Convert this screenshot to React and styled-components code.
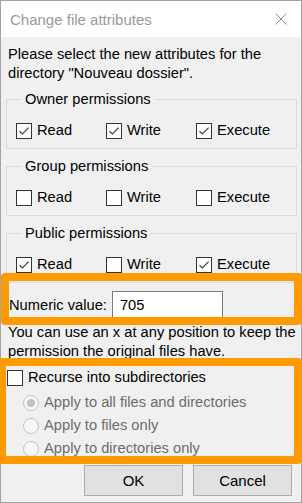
import React from "react";
import styled, { createGlobalStyle } from "styled-components";

const GlobalStyle = createGlobalStyle`
  html, body {
    margin: 0;
    padding: 0;
    background: #ffffff;
  }
  body {
    font-family: "Liberation Sans", Arial, sans-serif;
  }
`;

const groups = [
  { title: "Owner permissions", read: true, write: true, execute: true },
  { title: "Group permissions", read: false, write: false, execute: false },
  { title: "Public permissions", read: true, write: false, execute: true },
];

const applyOptions = [
  { label: "Apply to all files and directories", selected: true },
  { label: "Apply to files only", selected: false },
  { label: "Apply to directories only", selected: false },
];

const Stage = styled.div`
  position: relative;
  width: 302px;
  height: 503px;
  overflow: hidden;
`;

const Window = styled.div`
  box-sizing: border-box;
  width: 302px;
  height: 503px;
  border: 1px solid #a3a3a3;
  background: #f0f0f0;
  display: flex;
  flex-direction: column;
`;

const TitleBar = styled.div`
  height: 36px;
  flex: none;
  background: #ffffff;
  display: flex;
  align-items: center;
  justify-content: space-between;
  padding: 0 14px 0 9px;
  color: #999999;
  font-size: 15px;
`;

const CloseIcon = styled.svg`
  width: 12px;
  height: 12px;
  display: block;
`;

const Body = styled.div`
  flex: 1;
  display: flex;
  flex-direction: column;
  padding: 8px 4px 0 5px;
  font-size: 14.7px;
  line-height: 19px;
  color: #000000;
`;

const Paragraph = styled.div`
  padding-left: 2px;
  margin-bottom: ${({ $gap }) => $gap || 0}px;
`;

const Group = styled.fieldset`
  margin: 0 0 8px 0;
  padding: 12px 0 8px 9px;
  border: 1px solid #dcdcdc;
  min-width: 0;
`;

const Legend = styled.legend`
  padding: 0 3px;
  margin-left: 6px;
  line-height: 19px;
`;

const PermRow = styled.div`
  display: grid;
  grid-template-columns: 90px 90px 1fr;
  height: 19px;
  align-items: center;
`;

const CheckLabel = styled.label`
  display: flex;
  align-items: center;
  gap: 5px;
  color: ${({ $disabled }) => ($disabled ? "#6d6d6d" : "#000000")};
`;

const Box = styled.span`
  box-sizing: border-box;
  width: 16px;
  height: 16px;
  flex: none;
  border: 1px solid #333333;
  background: #ffffff;
  display: flex;
  align-items: center;
  justify-content: center;
`;

const NumericRow = styled.div`
  display: flex;
  align-items: center;
  gap: 5px;
  margin: 0 0 4px 3px;
`;

const Input = styled.div`
  box-sizing: border-box;
  width: 111px;
  height: 28px;
  border: 1px solid #7a7a7a;
  background: #ffffff;
  padding: 0 7px;
  display: flex;
  align-items: center;
`;

const Recurse = styled.div`
  display: flex;
  flex-direction: column;
  margin-top: 7px;
  padding-left: 1px;
`;

const RecurseRow = styled.div`
  height: 19px;
  display: flex;
  align-items: center;
  margin-bottom: 4px;
`;

const RadioRow = styled.label`
  height: 23px;
  display: flex;
  align-items: center;
  gap: 5px;
  padding-left: 16px;
  color: #6d6d6d;
`;

const RadioCircle = styled.span`
  box-sizing: border-box;
  width: 16px;
  height: 16px;
  flex: none;
  border-radius: 50%;
  border: 1px solid #c4c4c4;
  background: #f7f7f7;
  display: flex;
  align-items: center;
  justify-content: center;

  &::after {
    content: "";
    width: 8px;
    height: 8px;
    border-radius: 50%;
    background: ${({ $selected }) => ($selected ? "#c2c2c2" : "transparent")};
  }
`;

const Buttons = styled.div`
  display: flex;
  justify-content: flex-end;
  gap: 10px;
  margin-top: 5px;
  padding-right: 5px;
`;

const Button = styled.button`
  box-sizing: border-box;
  width: 99px;
  height: 31px;
  border: 1px solid #adadad;
  background: #e1e1e1;
  font-family: inherit;
  font-size: 15px;
  color: #000000;
  padding: 0;
`;

const Highlight = styled.div`
  position: absolute;
  box-sizing: border-box;
  left: ${({ $left }) => $left}px;
  top: ${({ $top }) => $top}px;
  width: ${({ $width }) => $width}px;
  height: ${({ $height }) => $height}px;
  border: 8px solid #ff9a00;
  border-radius: 4px;
  pointer-events: none;
`;

const CheckMark = () => (
  <svg width="12" height="12" viewBox="0 0 12 12">
    <path d="M1.5 6.2 L4.4 9 L10.6 2.6" fill="none" stroke="#404040" strokeWidth="1.2" />
  </svg>
);

const Checkbox = ({ checked, label }) => (
  <CheckLabel>
    <Box>{checked && <CheckMark />}</Box>
    {label}
  </CheckLabel>
);

const PermissionGroup = ({ group }) => (
  <Group>
    <Legend>{group.title}</Legend>
    <PermRow>
      <Checkbox checked={group.read} label="Read" />
      <Checkbox checked={group.write} label="Write" />
      <Checkbox checked={group.execute} label="Execute" />
    </PermRow>
  </Group>
);

const App = () => {
  return (
    <Stage>
      <GlobalStyle />
      <Window>
        <TitleBar>
          <span>Change file attributes</span>
          <CloseIcon viewBox="0 0 12 12">
            <path d="M0.5 0.5 L11.5 11.5 M11.5 0.5 L0.5 11.5" stroke="#8a8a8a" strokeWidth="1" />
          </CloseIcon>
        </TitleBar>
        <Body>
          <Paragraph $gap={7}>
            Please select the new attributes for the
            <br />
            directory "Nouveau dossier".
          </Paragraph>
          {groups.map((g) => (
            <PermissionGroup key={g.title} group={g} />
          ))}
          <NumericRow>
            <span>Numeric value:</span>
            <Input>705</Input>
          </NumericRow>
          <Paragraph>
            You can use an x at any position to keep the
            <br />
            permission the original files have.
          </Paragraph>
          <Recurse>
            <RecurseRow>
              <Checkbox checked={false} label="Recurse into subdirectories" />
            </RecurseRow>
            {applyOptions.map((o) => (
              <RadioRow key={o.label}>
                <RadioCircle $selected={o.selected} />
                {o.label}
              </RadioRow>
            ))}
          </Recurse>
          <Buttons>
            <Button>OK</Button>
            <Button>Cancel</Button>
          </Buttons>
        </Body>
      </Window>
      <Highlight $left={1} $top={273} $width={301} $height={52} />
      <Highlight $left={-2} $top={358} $width={304} $height={106} />
    </Stage>
  );
};

export default App;
